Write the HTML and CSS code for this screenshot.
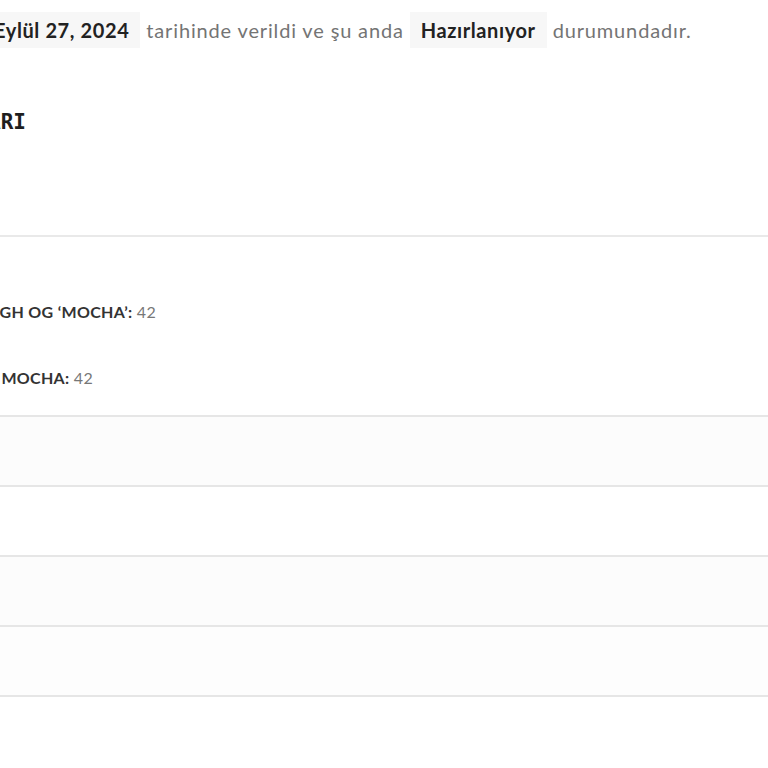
FILE: index.html
```html
<!DOCTYPE html>
<html lang="tr">
<head>
<meta charset="utf-8">
<title>Sipariş</title>
<link rel="stylesheet" href="styles.css">
</head>
<body>
<main class="page">
  <p class="intro"><mark class="chip">Eylül 27, 2024</mark> tarihinde verildi ve şu anda <mark class="chip">Hazırlanıyor</mark> durumundadır.</p>

  <h2 class="title"><span>SİPARİŞ DETAYLARI</span></h2>

  <section class="table">
    <div class="row row-product">
      <div class="meta"><span><strong>NIKE DUNK LOW HIGH OG ‘MOCHA’:</strong> 42</span></div>
      <div class="meta"><span><strong>DUNK MOCHA:</strong> 42</span></div>
    </div>
    <div class="row row-alt"></div>
    <div class="row"></div>
    <div class="row row-alt"></div>
    <div class="row row-soft"></div>
  </section>
</main>
</body>
</html>
```
FILE: styles.css
```css
html, body {
  margin: 0;
  padding: 0;
  background: #ffffff;
  overflow: hidden;
}

.page {
  width: 768px;
  font-family: Lato, "Open Sans", sans-serif;
  color: #747474;
}

.intro {
  margin: 12px 0 0 -17px;
  font-size: 20px;
  line-height: 36px;
  white-space: nowrap;
  letter-spacing: 0.85px;
}

.chip {
  display: inline-block;
  background: #f7f7f7;
  color: #222222;
  font-weight: 700;
  padding: 0 11px;
  line-height: 36px;
  letter-spacing: 0.6px;
}

.title {
  display: flex;
  justify-content: flex-end;
  width: 26px;
  margin: 0;
  padding-top: 60px;
  height: 28px;
  font-family: "DejaVu Sans Mono", monospace;
  font-size: 21px;
  line-height: 28px;
  font-weight: 700;
  color: #1e1e1e;
  white-space: nowrap;
}

.table {
  margin-top: 99px;
  border-top: 2px solid #e9e9e9;
  display: flex;
  flex-direction: column;
}

.row {
  height: 68px;
  border-bottom: 2px solid #e6e6e6;
}

.row-alt {
  background: #fcfcfc;
}

.row-soft {
  background: #fdfdfd;
}

.row-product {
  display: flex;
  flex-direction: column;
  padding-top: 63px;
  box-sizing: border-box;
  height: 180px;
  gap: 42px;
}

.meta {
  display: flex;
  justify-content: flex-end;
  height: 24px;
  line-height: 24px;
  white-space: nowrap;
  font-size: 16px;
  letter-spacing: 0.3px;
  color: #777777;
}

.meta:first-child {
  width: 156px;
}

.meta:last-child {
  width: 93px;
}

.meta strong {
  color: #333333;
  font-weight: 700;
}
```
